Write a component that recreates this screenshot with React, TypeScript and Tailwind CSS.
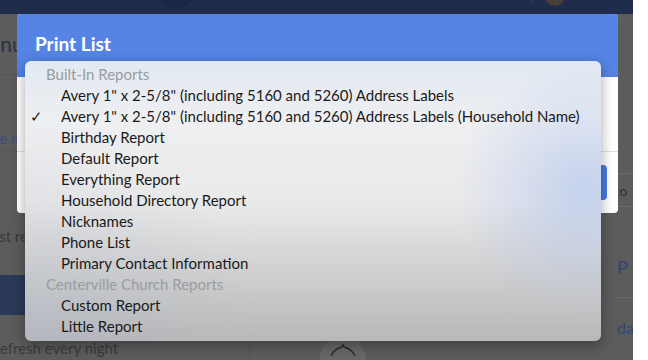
import React from "react";

const builtIn = [
  { label: 'Avery 1" x 2-5/8" (including 5160 and 5260) Address Labels' },
  { label: 'Avery 1" x 2-5/8" (including 5160 and 5260) Address Labels (Household Name)', checked: true },
  { label: "Birthday Report" },
  { label: "Default Report" },
  { label: "Everything Report" },
  { label: "Household Directory Report" },
  { label: "Nicknames" },
  { label: "Phone List" },
  { label: "Primary Contact Information" },
];

const church = [{ label: "Custom Report" }, { label: "Little Report" }];

function Item({ label, checked }: { label: string; checked?: boolean }) {
  return (
    <div className="relative h-[21px] flex items-center pl-[36px] text-[15px] text-[#1a1a1a] whitespace-nowrap">
      {checked && <span className="absolute left-[5px] text-[15px] text-[#222]">✓</span>}
      {label}
    </div>
  );
}

function Group({ label }: { label: string }) {
  return (
    <div className="h-[21px] flex items-center pl-[21px] text-[15px] text-[#9a9ca0] whitespace-nowrap">{label}</div>
  );
}

export default function App() {
  return (
    <div className="w-[648px] h-[360px] bg-white overflow-hidden font-['Lato','Open_Sans',sans-serif]">
      <div className="relative w-[633px] h-[360px] bg-[#5c5c5c] overflow-hidden">
        {/* top bar */}
        <div className="relative h-[14px] bg-[#1f2c4c]">
          <div className="absolute left-[150px] top-[-42px] w-[50px] h-[50px] rounded-full bg-[#1a2645]" />
          <div className="absolute left-[531px] top-[0px] w-[3px] h-[3px] rounded-full bg-[#3b3b3b]" />
          <div className="absolute left-[545px] top-[-14px] w-[20px] h-[20px] rounded-full bg-[#4a3f38]" />
        </div>
        {/* page body */}
        <div className="flex h-[346px]">
          <div className="w-[250px] flex flex-col border-r border-[#555]">
            <div className="h-[60px] flex items-center -ml-[30px] text-[21px] text-[#2c3140] whitespace-nowrap">Menu</div>
            <div className="h-[1px] bg-[#555]" />
            <div className="h-[75px] flex items-end pb-[1px] -ml-[15px] text-[15px] text-[#3a4d78] whitespace-nowrap">see more</div>
            <div className="h-[1px] bg-[#545454]" />
            <div className="h-[99px] flex items-end pb-[3px] -ml-[16px] text-[15px] text-[#393939] whitespace-nowrap">Last refresh</div>
            <div className="h-[25px]" />
            <div className="h-[40px] bg-[#2b3858]" />
            <div className="h-[23px]" />
            <div className="h-[20px] flex items-center -ml-[9px] text-[15px] text-[#3a3a3a] whitespace-nowrap">Refresh every night</div>
          </div>
          <div className="flex-1 relative">
            <div className="absolute left-[70px] bottom-[-22px] w-[46px] h-[46px] rounded-full bg-[#676767]">
              <svg width="30" height="16" viewBox="0 0 30 16" className="absolute left-[8px] top-[6px]">
                <path d="M3 14 Q6 8 11 6 Q14 6 15 3 Q16 6 19 6 Q24 8 27 14" fill="none" stroke="#2a2a2a" strokeWidth="1.4" />
              </svg>
            </div>
          </div>
          <div className="w-[20px] flex flex-col">
            <div className="h-[159px]" />
            <div className="h-[1px] bg-[#6c6c6c]" />
            <div className="h-[32px] flex items-center text-[14px] text-[#333] whitespace-nowrap">co</div>
            <div className="h-[1px] bg-[#6c6c6c]" />
            <div className="h-[90px] flex items-end pb-[16px] pl-[4px] text-[18px] text-[#2f4475]">P</div>
            <div className="h-[1px] bg-[#666]" />
            <div className="h-[60px] flex items-center pl-[4px] text-[16px] text-[#2f4475] whitespace-nowrap">da</div>
          </div>
        </div>

        {/* modal */}
        <div className="absolute left-[17px] top-[14px] w-[601px] h-[199px] bg-white rounded-[4px] flex flex-col overflow-hidden">
          <div className="h-[63px] bg-[#5584e4] flex items-center pl-[18px] pb-[2px] text-[19px] font-bold text-white">
            Print List
          </div>
          <div className="h-[75px] border-b border-[#e2e2e2]" />
          <div className="flex-1 flex items-center justify-end pr-[11px]">
            <div className="w-[70px] h-[35px] bg-[#4a7be0] rounded-[4px]" />
          </div>
        </div>

        {/* native select menu */}
        <div className="absolute left-[25px] top-[61px] w-[576px] h-[280px] rounded-[6px] shadow-[0_4px_14px_rgba(0,0,0,0.35)] bg-[radial-gradient(circle_at_97%_46%,rgba(165,190,240,0.55),rgba(165,190,240,0)_22%),radial-gradient(circle_at_0%_100%,rgba(170,180,200,0.35),rgba(170,180,200,0)_35%),linear-gradient(180deg,#e2e9f2_0%,#eeeff1_22%,#eaeaea_50%,#d0d0d0_75%,#b8b8b8_100%)] pt-[3px] overflow-hidden">
          <Group label="Built-In Reports" />
          {builtIn.map((it) => (
            <Item key={it.label} label={it.label} checked={it.checked} />
          ))}
          <Group label="Centerville Church Reports" />
          {church.map((it) => (
            <Item key={it.label} label={it.label} />
          ))}
        </div>
      </div>
    </div>
  );
}
